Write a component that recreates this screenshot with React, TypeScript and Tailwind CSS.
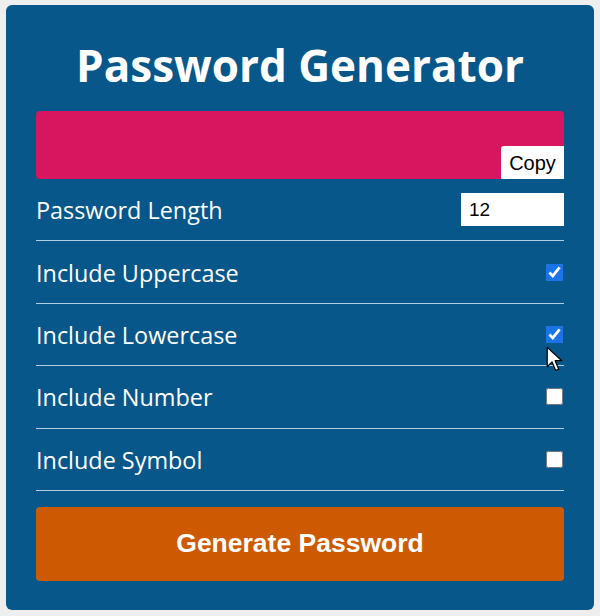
import React, { useState } from 'react';

const options = [
  { label: 'Include Uppercase', checked: true },
  { label: 'Include Lowercase', checked: true },
  { label: 'Include Number', checked: false },
  { label: 'Include Symbol', checked: false },
];

export default function App() {
  const [length, setLength] = useState('12');
  const [flags, setFlags] = useState(options.map((o) => o.checked));

  return (
    <div className="min-h-[616px] w-[600px] bg-[#eeeeee] px-[6px] pt-[5px]">
      <div className="relative rounded-[6px] bg-[#08578b] px-[30px] pt-[28px] pb-[29px] font-['Open_Sans',sans-serif] text-white">
        {/* Title */}
        <h1 className="mb-[14px] text-center text-[44px] leading-[64px] font-bold">
          Password Generator
        </h1>

        {/* Result box */}
        <div className="relative h-[68px] rounded-[4px] bg-[#d8155f]">
          <button className="absolute right-0 bottom-0 h-[33px] w-[63px] rounded-tl-[3px] bg-white font-['Liberation_Sans',sans-serif] text-[20px] text-black">
            Copy
          </button>
        </div>

        {/* Settings */}
        <div className="flex flex-col">
          <div className="flex h-[62.4px] items-center justify-between border-b border-[#b4cfe2]">
            <span className="pt-[2px] text-[23.4px]">Password Length</span>
            <input
              type="number"
              value={length}
              onChange={(e) => setLength(e.target.value)}
              className="h-[33px] w-[103px] bg-white px-[8px] font-['Liberation_Sans',sans-serif] text-[19px] text-black outline-none"
            />
          </div>
          {options.map((o, i) => (
            <div
              key={o.label}
              className="flex h-[62.4px] items-center justify-between border-b border-[#b4cfe2]"
            >
              <span className="pt-[2px] text-[23.4px]">{o.label}</span>
              <input
                type="checkbox"
                checked={flags[i]}
                onChange={() => setFlags(flags.map((f, j) => (j === i ? !f : f)))}
                className="mr-[1px] h-[17px] w-[17px] accent-[#1a73e8]"
              />
            </div>
          ))}
        </div>

        <button className="mt-[16px] h-[74px] w-full rounded-[4px] bg-[#cd5a02] font-['Liberation_Sans',sans-serif] text-[26.5px] font-bold text-white">
          Generate Password
        </button>

        {/* mouse pointer */}
        <svg
          className="pointer-events-none absolute left-[540px] top-[341px]"
          width="17"
          height="27"
          viewBox="0 0 14 22"
        >
          <path
            d="M1 1 L1 17 L5 13 L8 20 L10.5 19 L7.5 12 L13 12 Z"
            fill="white"
            stroke="black"
            strokeWidth="1"
            strokeLinejoin="round"
          />
        </svg>
      </div>
    </div>
  );
}
